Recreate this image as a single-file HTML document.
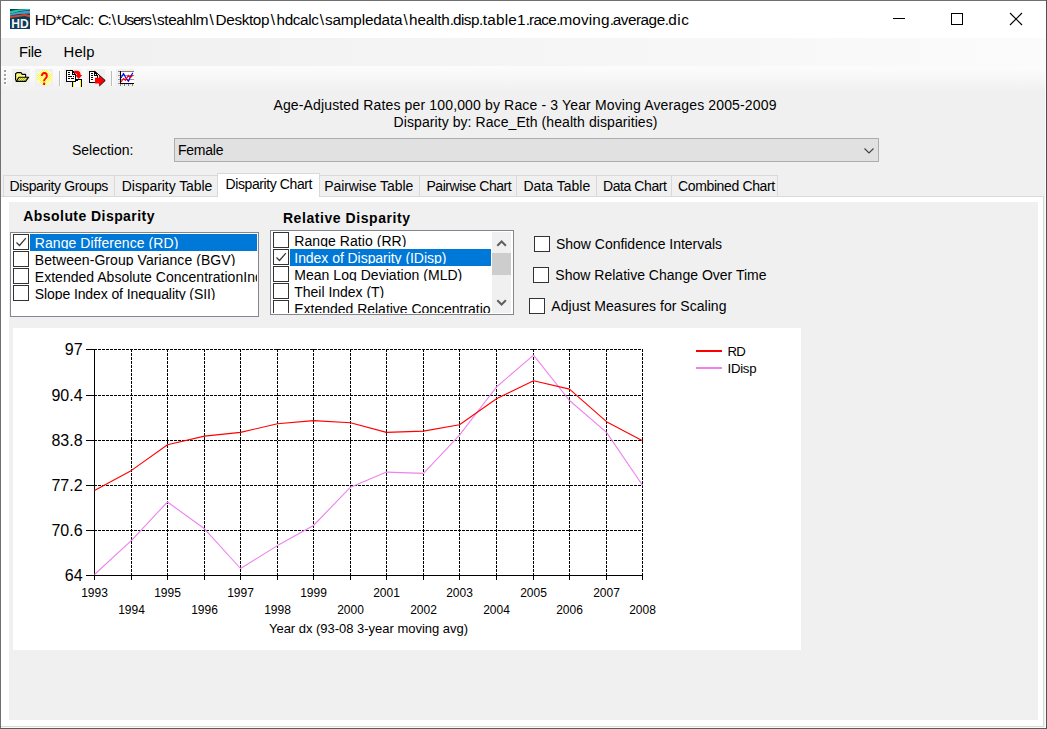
<!DOCTYPE html>
<html lang="en">
<head>
<meta charset="utf-8">
<title>HD*Calc</title>
<style>
html,body{margin:0;padding:0;}
body{width:1047px;height:729px;overflow:hidden;background:#f0f0f0;font-family:"Liberation Sans",sans-serif;color:#000;}
#win{position:relative;width:1047px;height:729px;overflow:hidden;background:#f0f0f0;}
.abs{position:absolute;}
.t{position:absolute;white-space:nowrap;line-height:1;}
#b-top{left:0;top:0;width:1047px;height:1px;background:#707070;}
#b-left{left:0;top:0;width:1px;height:729px;background:#707070;}
#b-right{left:1046px;top:0;width:1px;height:729px;background:#505050;}
#w-right{left:1045px;top:38px;width:1px;height:690px;background:#fbfbfb;}
#w-bottom{left:1px;top:727px;width:1045px;height:1px;background:#fbfbfb;}
#b-bottom{left:0;top:728px;width:1047px;height:1px;background:#5a5a5a;}
#titlebar{left:1px;top:1px;width:1045px;height:37px;background:#fff;}
#menubar{left:1px;top:38px;width:1045px;height:28px;background:linear-gradient(to right,#f0f0f0 0%,#f5f5f5 50%,#fbfbfb 100%);}
#toolbar{left:1px;top:66px;width:1045px;height:26px;background:linear-gradient(to bottom,#fcfcfc 0%,#f8f8f8 40%,#f0f0f0 100%);}
.tbtn{position:absolute;top:69px;width:18px;height:18px;background:#f0f0f0;}
.sep{position:absolute;top:71px;width:1px;height:15px;background:#bdbdbd;box-shadow:1px 0 0 #fdfdfd;}
.tab{position:absolute;top:175px;height:21px;box-sizing:border-box;border:1px solid #d9d9d9;border-bottom:none;background:#f0f0f0;}
.tab.sel{top:173px;height:24px;background:#fff;}
#tabpage{left:1px;top:196px;width:1043px;height:531px;background:#fff;box-sizing:border-box;border:1px solid #d9d9d9;border-left:none;}
#panel{left:9px;top:202px;width:1029px;height:518px;background:#f0f0f0;}
.listbox{position:absolute;box-sizing:border-box;border:1px solid #828790;background:#fff;overflow:hidden;}
.row{position:absolute;height:17px;overflow:hidden;white-space:nowrap;font-size:14px;}
.row .clip{position:absolute;left:0;top:0;width:100%;height:15px;overflow:hidden;}
.row span{position:absolute;top:2px;line-height:1;}
.row.sel{background:#0078d7;color:#fff;}
.cb{position:absolute;width:16px;height:16px;box-sizing:border-box;border:1px solid #333;background:#fff;}
#combo{left:174px;top:138px;width:705px;height:24px;box-sizing:border-box;border:1px solid #adadad;background:#e1e1e1;}
</style>
</head>
<body>
<div id="win">
  <div id="titlebar" class="abs"></div>
  <svg class="abs" style="left:10px;top:9px" width="20" height="20" viewBox="0 0 20 20" font-family="Liberation Sans, sans-serif">
    <rect width="20" height="20" fill="#0f3b58"/>
    <path d="M0,2.2 C6,0.6 11,0.2 17.5,0 L20,0 L20,0.8 C12,1.6 6,2.8 0,4.8 Z" fill="#19cf9d"/>
    <path d="M0,4.9 C6,3 13,2.2 20,1.6 L20,4.6 C13,4.6 6,5.4 0,6.8 Z" fill="#4f96cc"/>
    <path d="M0,7 L8,6 L14.8,4.9 L20,6 L20,8.6 L14.8,7 L8,8 L0,8.9 Z" fill="#cc4a2d"/>
    <text x="10" y="18.7" font-size="13.4" font-weight="bold" fill="#f4f6f8" text-anchor="middle" textLength="17.4" lengthAdjust="spacingAndGlyphs">HD</text>
  </svg>
  <svg class="abs" style="left:880px;top:6px" width="160" height="26" viewBox="880 6 160 26" fill="none" stroke="#000" stroke-width="1" shape-rendering="crispEdges">
    <line x1="893" y1="18.5" x2="905" y2="18.5"/>
    <rect x="951.5" y="13.5" width="11" height="11"/>
    <g shape-rendering="auto" stroke-width="1.1"><line x1="1010" y1="13" x2="1022" y2="25"/><line x1="1022" y1="13" x2="1010" y2="25"/></g>
  </svg>
  <div id="menubar" class="abs"></div>
  <div id="toolbar" class="abs"></div>
  <!-- toolbar -->
  <div class="tbtn" style="left:12px"></div><div class="tbtn" style="left:35px"></div>
  <div class="tbtn" style="left:64px"></div><div class="tbtn" style="left:87px"></div><div class="tbtn" style="left:116px"></div>
  <div class="sep" style="left:59px"></div><div class="sep" style="left:111px"></div>
  <svg class="abs" style="left:0;top:66px" width="140" height="24" viewBox="0 66 140 24" font-family="Liberation Sans, sans-serif">
    <g shape-rendering="crispEdges">
      <g fill="#fff"><rect x="5" y="71" width="2" height="2"/><rect x="5" y="75" width="2" height="2"/><rect x="5" y="79" width="2" height="2"/><rect x="5" y="83" width="2" height="2"/></g>
      <g fill="#a0a0a0"><rect x="4" y="70" width="2" height="2"/><rect x="4" y="74" width="2" height="2"/><rect x="4" y="78" width="2" height="2"/><rect x="4" y="82" width="2" height="2"/></g>
    </g>
    <defs>
      <pattern id="dyw" width="2" height="2" patternUnits="userSpaceOnUse"><rect width="2" height="2" fill="#ffffff"/><rect x="0" y="0" width="1" height="1" fill="#ffff00"/><rect x="1" y="1" width="1" height="1" fill="#ffff00"/></pattern>
      <pattern id="dyg" width="2" height="2" patternUnits="userSpaceOnUse"><rect width="2" height="2" fill="#ffff00"/><rect x="0" y="0" width="1" height="1" fill="#a8a890"/><rect x="1" y="1" width="1" height="1" fill="#a8a890"/></pattern>
    </defs>
    <!-- open folder -->
    <g stroke="#000" stroke-width="1.15" stroke-linejoin="round">
      <path d="M15.6,80.6 L15.6,73.8 L17,72.6 L21,72.6 L22.2,74.4 L25.6,74.4 L25.6,77" fill="url(#dyw)"/>
      <path d="M16.2,81.4 L19,77.2 L28.6,77.2 L25.6,81.4 Z" fill="url(#dyg)"/>
    </g>
    <!-- help -->
    <circle cx="44.4" cy="77.5" r="7.7" fill="url(#dyw)" shape-rendering="crispEdges"/>
    <text transform="translate(44.5,84.7) scale(0.78,1)" x="0" y="0" font-size="17.5" font-weight="bold" fill="#ff0000" text-anchor="middle">?</text>
    <!-- import -->
    <g shape-rendering="crispEdges">
      <rect x="74" y="80" width="7" height="7" fill="#fff"/>
      <rect x="73" y="81" width="1" height="6" fill="#ffff00"/><rect x="80" y="80" width="1" height="7" fill="#ffff00"/>
      <rect x="72" y="81" width="1" height="6" fill="#000"/><rect x="81" y="79" width="1" height="8" fill="#000"/><rect x="78" y="79" width="3" height="1" fill="#000"/>
      <path d="M66.5,70.5 L72.5,70.5 L75.5,74.5 L75.5,81.5 L66.5,81.5 Z" fill="#fff" stroke="#000"/>
      <path d="M72.5,70.5 L72.5,74.5 L75.5,74.5" fill="none" stroke="#000"/>
      <g fill="#000"><rect x="68" y="72" width="2" height="1"/><rect x="68" y="74" width="2" height="1"/><rect x="68" y="76" width="4" height="1"/><rect x="73" y="76" width="1" height="1"/><rect x="68" y="78" width="2" height="1"/><rect x="71" y="78" width="3" height="1"/><rect x="76" y="79" width="2" height="2"/></g>
    </g>
    <path d="M74.2,70.8 L77.5,70.8 C79.6,71 80.6,72.4 80.6,75 L82.3,75 L78.7,79 L75.2,75 L77,75 C77,73.8 76.4,73.4 74.2,73.4 Z" fill="#ff0000"/>
    <!-- export -->
    <g shape-rendering="crispEdges">
      <path d="M89.5,71.5 L94.5,71.5 L97.5,75.5 L97.5,82.5 L89.5,82.5 Z" fill="#fff" stroke="#000"/>
      <path d="M94.5,71.5 L94.5,75.5 L97.5,75.5" fill="none" stroke="#000"/>
      <g fill="#000"><rect x="91" y="73" width="2" height="1"/><rect x="91" y="75" width="2" height="1"/><rect x="91" y="77" width="2" height="1"/><rect x="91" y="79" width="2" height="1"/></g>
    </g>
    <path d="M95,77.8 L99,77.8 L99,75.6 L105.2,80.5 L99,86 L99,83.6 L95,83.6 Z" fill="#ff0000"/>
    <path d="M94.8,71.2 L105.2,80.5 L99.4,86" fill="none" stroke="#000" stroke-width="1"/>
    <!-- chart -->
    <g shape-rendering="crispEdges">
      <rect x="121" y="72" width="13" height="11" fill="#fff"/>
      <g stroke="#808080"><line x1="118" y1="71.5" x2="134" y2="71.5"/></g>
      <g stroke="#9a9a9a"><line x1="118" y1="75.5" x2="134" y2="75.5"/><line x1="118" y1="79.5" x2="134" y2="79.5"/></g>
      <g stroke="#c8c8c8"><line x1="119" y1="73.5" x2="120" y2="73.5"/><line x1="119" y1="77.5" x2="120" y2="77.5"/><line x1="119" y1="81.5" x2="120" y2="81.5"/></g>
      <g stroke="#000"><line x1="120.5" y1="71" x2="120.5" y2="84"/><line x1="120" y1="83.5" x2="134" y2="83.5"/></g>
      <g stroke="#909090"><line x1="118" y1="83.5" x2="120" y2="83.5"/></g>
      <g stroke="#808080"><line x1="120.5" y1="84" x2="120.5" y2="86"/><line x1="124.5" y1="84" x2="124.5" y2="86"/><line x1="128.5" y1="84" x2="128.5" y2="86"/><line x1="132.5" y1="84" x2="132.5" y2="86"/></g>
      <g stroke="#c0c0c0"><line x1="122.5" y1="84" x2="122.5" y2="85"/><line x1="126.5" y1="84" x2="126.5" y2="85"/><line x1="130.5" y1="84" x2="130.5" y2="85"/></g>
    </g>
    <polyline points="121.3,77.6 123.5,73.4 125.6,77.6 128.5,81.4 130.5,76.5 132.6,73.2" fill="none" stroke="#0000ff" stroke-width="1.15" stroke-linejoin="round" stroke-linecap="round"/>
    <polyline points="121.3,81.6 123.5,78.5 125.4,80.4 128.4,75.3 130.4,77.6 132.8,75.4" fill="none" stroke="#ff0000" stroke-width="1.15" stroke-linejoin="round" stroke-linecap="round"/>
  </svg>

  <div id="combo" class="abs"></div>
  <svg class="abs" style="left:860px;top:144px" width="16" height="12" viewBox="860 144 16 12"><polyline points="864.5,148.5 869,153 873.5,148.5" fill="none" stroke="#404040" stroke-width="1.1"/></svg>

  <div class="tab" style="left:3px;width:112px"></div>
  <div class="tab" style="left:114px;width:104px"></div>
  <div class="tab sel" style="left:217px;width:103px"></div>
  <div class="tab" style="left:319px;width:101px"></div>
  <div class="tab" style="left:419px;width:98px"></div>
  <div class="tab" style="left:516px;width:81px"></div>
  <div class="tab" style="left:596px;width:76px"></div>
  <div class="tab" style="left:671px;width:107px"></div>
  <div id="tabpage" class="abs"></div>
  <div class="abs" style="left:218px;top:195px;width:101px;height:3px;background:#fff"></div>
  <div id="panel" class="abs"></div>

  <div class="listbox" style="left:10px;top:232px;width:249px;height:85px">
  <div class="row sel" style="left:19px;top:1px;width:227px"><div class="clip"><span style="left:4.8px;letter-spacing:0.069px">Range Difference (RD)</span></div></div>
  <div class="cb" style="left:2px;top:1px;"><svg width="14" height="14" viewBox="0 0 14 14" style="position:absolute;left:0;top:0"><polyline points="2.5,7.5 5.5,10.5 11.8,3.2" fill="none" stroke="#333" stroke-width="1.2"/></svg></div>
  <div class="row" style="left:19px;top:18px;width:227px"><div class="clip"><span style="left:4.8px;letter-spacing:0.059px">Between-Group Variance (BGV)</span></div></div>
  <div class="cb" style="left:2px;top:18px;"></div>
  <div class="row" style="left:19px;top:35px;width:227px"><div class="clip"><span style="left:4.8px;letter-spacing:0.020px">Extended Absolute ConcentrationIndex (ACI)</span></div></div>
  <div class="cb" style="left:2px;top:35px;"></div>
  <div class="row" style="left:19px;top:52px;width:227px"><div class="clip"><span style="left:4.8px;letter-spacing:-0.102px">Slope Index of Inequality (SII)</span></div></div>
  <div class="cb" style="left:2px;top:52px;"></div>
  <div class="abs" style="left:0;bottom:0;width:100%;height:1px;background:#fff"></div></div>
  <div class="listbox" style="left:270px;top:230px;width:244px;height:85px">
  <div class="row" style="left:19px;top:1px;width:201px"><div class="clip"><span style="left:4.3px;letter-spacing:0.058px">Range Ratio (RR)</span></div></div>
  <div class="cb" style="left:2px;top:1px;"></div>
  <div class="row sel" style="left:19px;top:18px;width:201px"><div class="clip"><span style="left:4.3px;letter-spacing:-0.049px">Index of Disparity (IDisp)</span></div></div>
  <div class="cb" style="left:2px;top:18px;"><svg width="14" height="14" viewBox="0 0 14 14" style="position:absolute;left:0;top:0"><polyline points="2.5,7.5 5.5,10.5 11.8,3.2" fill="none" stroke="#333" stroke-width="1.2"/></svg></div>
  <div class="row" style="left:19px;top:35px;width:201px"><div class="clip"><span style="left:4.3px;letter-spacing:0.029px">Mean Log Deviation (MLD)</span></div></div>
  <div class="cb" style="left:2px;top:35px;"></div>
  <div class="row" style="left:19px;top:52px;width:201px"><div class="clip"><span style="left:4.3px;letter-spacing:-0.020px">Theil Index (T)</span></div></div>
  <div class="cb" style="left:2px;top:52px;"></div>
  <div class="row" style="left:19px;top:69px;width:201px"><div class="clip"><span style="left:4.3px;letter-spacing:-0.020px">Extended Relative Concentration Index (RCI)</span></div></div>
  <div class="cb" style="left:2px;top:69px;"></div>
  <div class="abs" style="left:221px;top:1px;width:19px;height:81px;background:#f0f0f0"></div>
  <div class="abs" style="left:221px;top:22px;width:19px;height:22px;background:#cdcdcd"></div>
  <svg class="abs" style="left:221px;top:1px" width="19" height="81" viewBox="0 0 19 81"><polyline points="5.3,13.8 9.6,9.5 13.9,13.8" fill="none" stroke="#606060" stroke-width="2"/><polyline points="5.3,68.2 9.6,72.5 13.9,68.2" fill="none" stroke="#606060" stroke-width="2"/></svg>
  <div class="abs" style="left:0;bottom:0;width:100%;height:1px;background:#fff"></div></div>
  <div class="cb" style="left:534px;top:236px;"></div>
  <div class="cb" style="left:533px;top:267px;"></div>
  <div class="cb" style="left:529px;top:298px;"></div>
<svg class="abs" style="left:13px;top:328px" width="788" height="322" viewBox="13 328 788 322" font-family="Liberation Sans, sans-serif">
<rect x="13" y="328" width="788" height="322" fill="#fff"/>
<g shape-rendering="crispEdges" stroke="#000" stroke-width="1" fill="none">
<line x1="94" y1="349.5" x2="643" y2="349.5" stroke-dasharray="3 1"/>
<line x1="94" y1="395.5" x2="643" y2="395.5" stroke-dasharray="3 1"/>
<line x1="94" y1="440.5" x2="643" y2="440.5" stroke-dasharray="3 1"/>
<line x1="94" y1="485.5" x2="643" y2="485.5" stroke-dasharray="3 1"/>
<line x1="94" y1="530.5" x2="643" y2="530.5" stroke-dasharray="3 1"/>
<line x1="131.5" y1="349" x2="131.5" y2="575" stroke-dasharray="3 1"/>
<line x1="167.5" y1="349" x2="167.5" y2="575" stroke-dasharray="3 1"/>
<line x1="204.5" y1="349" x2="204.5" y2="575" stroke-dasharray="3 1"/>
<line x1="240.5" y1="349" x2="240.5" y2="575" stroke-dasharray="3 1"/>
<line x1="277.5" y1="349" x2="277.5" y2="575" stroke-dasharray="3 1"/>
<line x1="313.5" y1="349" x2="313.5" y2="575" stroke-dasharray="3 1"/>
<line x1="350.5" y1="349" x2="350.5" y2="575" stroke-dasharray="3 1"/>
<line x1="386.5" y1="349" x2="386.5" y2="575" stroke-dasharray="3 1"/>
<line x1="423.5" y1="349" x2="423.5" y2="575" stroke-dasharray="3 1"/>
<line x1="459.5" y1="349" x2="459.5" y2="575" stroke-dasharray="3 1"/>
<line x1="496.5" y1="349" x2="496.5" y2="575" stroke-dasharray="3 1"/>
<line x1="533.5" y1="349" x2="533.5" y2="575" stroke-dasharray="3 1"/>
<line x1="569.5" y1="349" x2="569.5" y2="575" stroke-dasharray="3 1"/>
<line x1="606.5" y1="349" x2="606.5" y2="575" stroke-dasharray="3 1"/>
<line x1="642.5" y1="349" x2="642.5" y2="575" stroke-dasharray="3 1"/>
<line x1="94.5" y1="349" x2="94.5" y2="580"/>
<line x1="86" y1="575.5" x2="643" y2="575.5"/>
<line x1="86" y1="349.5" x2="94" y2="349.5"/>
<line x1="86" y1="395.5" x2="94" y2="395.5"/>
<line x1="86" y1="440.5" x2="94" y2="440.5"/>
<line x1="86" y1="485.5" x2="94" y2="485.5"/>
<line x1="86" y1="530.5" x2="94" y2="530.5"/>
<line x1="131.5" y1="576" x2="131.5" y2="580"/>
<line x1="167.5" y1="576" x2="167.5" y2="580"/>
<line x1="204.5" y1="576" x2="204.5" y2="580"/>
<line x1="240.5" y1="576" x2="240.5" y2="580"/>
<line x1="277.5" y1="576" x2="277.5" y2="580"/>
<line x1="313.5" y1="576" x2="313.5" y2="580"/>
<line x1="350.5" y1="576" x2="350.5" y2="580"/>
<line x1="386.5" y1="576" x2="386.5" y2="580"/>
<line x1="423.5" y1="576" x2="423.5" y2="580"/>
<line x1="459.5" y1="576" x2="459.5" y2="580"/>
<line x1="496.5" y1="576" x2="496.5" y2="580"/>
<line x1="533.5" y1="576" x2="533.5" y2="580"/>
<line x1="569.5" y1="576" x2="569.5" y2="580"/>
<line x1="606.5" y1="576" x2="606.5" y2="580"/>
<line x1="642.5" y1="576" x2="642.5" y2="580"/>
</g>
<polyline points="94.5,574.5 131.5,540.3 167.5,502.0 204.5,528.8 240.5,568.5 277.5,545.6 313.5,525.5 350.5,487.2 386.5,472.1 423.5,473.4 459.5,435.1 496.5,387.0 533.5,355.1 569.5,400.5 606.5,432.4 642.5,485.2" fill="none" stroke="#ee82ee" stroke-width="1.1" stroke-linejoin="round"/>
<polyline points="94.5,490.5 131.5,470.4 167.5,444.8 204.5,436.1 240.5,432.4 277.5,423.7 313.5,420.6 350.5,422.7 386.5,432.4 423.5,431.1 459.5,424.7 496.5,398.8 533.5,380.7 569.5,389.1 606.5,421.7 642.5,440.8" fill="none" stroke="#ff0000" stroke-width="1.1" stroke-linejoin="round"/>
<text x="82.6" y="355.2" font-size="16" text-anchor="end">97</text>
<text x="82.6" y="401.2" font-size="16" text-anchor="end">90.4</text>
<text x="82.6" y="446.2" font-size="16" text-anchor="end">83.8</text>
<text x="82.6" y="491.2" font-size="16" text-anchor="end">77.2</text>
<text x="82.6" y="536.2" font-size="16" text-anchor="end">70.6</text>
<text x="82.6" y="581.2" font-size="16" text-anchor="end">64</text>
<text x="94.5" y="596.6" font-size="12" text-anchor="middle">1993</text>
<text x="131.5" y="613.8" font-size="12" text-anchor="middle">1994</text>
<text x="167.5" y="596.6" font-size="12" text-anchor="middle">1995</text>
<text x="204.5" y="613.8" font-size="12" text-anchor="middle">1996</text>
<text x="240.5" y="596.6" font-size="12" text-anchor="middle">1997</text>
<text x="277.5" y="613.8" font-size="12" text-anchor="middle">1998</text>
<text x="313.5" y="596.6" font-size="12" text-anchor="middle">1999</text>
<text x="350.5" y="613.8" font-size="12" text-anchor="middle">2000</text>
<text x="386.5" y="596.6" font-size="12" text-anchor="middle">2001</text>
<text x="423.5" y="613.8" font-size="12" text-anchor="middle">2002</text>
<text x="459.5" y="596.6" font-size="12" text-anchor="middle">2003</text>
<text x="496.5" y="613.8" font-size="12" text-anchor="middle">2004</text>
<text x="533.5" y="596.6" font-size="12" text-anchor="middle">2005</text>
<text x="569.5" y="613.8" font-size="12" text-anchor="middle">2006</text>
<text x="606.5" y="596.6" font-size="12" text-anchor="middle">2007</text>
<text x="642.5" y="613.8" font-size="12" text-anchor="middle">2008</text>
<line x1="696" y1="351" x2="722" y2="351" stroke="#ff0000" stroke-width="2" shape-rendering="crispEdges"/>
<line x1="696" y1="368" x2="722" y2="368" stroke="#ee82ee" stroke-width="2" shape-rendering="crispEdges"/>
</svg>
  <div class="t" id="m1" style="left:19.1px;top:44.77px;font-size:14.8px;letter-spacing:-0.336px;">File</div>
  <div class="t" id="m2" style="left:63.6px;top:44.77px;font-size:14.8px;letter-spacing:0.141px;">Help</div>
  <div class="t" id="h1" style="left:273.4px;top:97.85px;font-size:14px;letter-spacing:0.148px;">Age-Adjusted Rates per 100,000 by Race - 3 Year Moving Averages 2005-2009</div>
  <div class="t" id="h2" style="left:393.6px;top:114.85px;font-size:14px;letter-spacing:0.075px;">Disparity by: Race_Eth (health disparities)</div>
  <div class="t" id="sel" style="left:71.9px;top:143.05px;font-size:14px;letter-spacing:0.002px;">Selection:</div>
  <div class="t" id="fem" style="left:178.0px;top:143.05px;font-size:14px;letter-spacing:-0.248px;">Female</div>
  <div class="t" id="tb1" style="left:9.5px;top:179.15px;font-size:14px;letter-spacing:-0.360px;">Disparity Groups</div>
  <div class="t" id="tb2" style="left:121.8px;top:179.15px;font-size:14px;letter-spacing:-0.071px;">Disparity Table</div>
  <div class="t" id="tb3" style="left:225.6px;top:177.45px;font-size:14px;letter-spacing:-0.413px;">Disparity Chart</div>
  <div class="t" id="tb4" style="left:324.2px;top:179.15px;font-size:14px;letter-spacing:-0.073px;">Pairwise Table</div>
  <div class="t" id="tb5" style="left:426.4px;top:179.15px;font-size:14px;letter-spacing:-0.438px;">Pairwise Chart</div>
  <div class="t" id="tb6" style="left:523.4px;top:179.15px;font-size:14px;letter-spacing:0.011px;">Data Table</div>
  <div class="t" id="tb7" style="left:603.0px;top:179.15px;font-size:14px;letter-spacing:-0.420px;">Data Chart</div>
  <div class="t" id="tb8" style="left:678.0px;top:179.15px;font-size:14px;letter-spacing:-0.367px;">Combined Chart</div>
  <div class="t" id="abs" style="left:23.3px;top:209.05px;font-size:14px;letter-spacing:0.439px;font-weight:bold;">Absolute Disparity</div>
  <div class="t" id="rel" style="left:282.9px;top:210.95px;font-size:14px;letter-spacing:0.567px;font-weight:bold;">Relative Disparity</div>
  <div class="t" id="c1" style="left:556.0px;top:237.15px;font-size:14px;letter-spacing:-0.022px;">Show Confidence Intervals</div>
  <div class="t" id="c2" style="left:555.3px;top:267.95px;font-size:14px;letter-spacing:0.014px;">Show Relative Change Over Time</div>
  <div class="t" id="c3" style="left:551.3px;top:298.75px;font-size:14px;letter-spacing:0.033px;">Adjust Measures for Scaling</div>
  <div class="t" id="lg1" style="left:727.6px;top:344.73px;font-size:13.2px;letter-spacing:-0.781px;">RD</div>
  <div class="t" id="lg2" style="left:727.6px;top:361.83px;font-size:13.2px;letter-spacing:-0.289px;">IDisp</div>
  <div class="t" id="xt" style="left:269.0px;top:621.50px;font-size:13px;letter-spacing:-0.021px;">Year dx (93-08 3-year moving avg)</div>
  <div class="t" id="title" style="left:36.3px;top:12.15px;font-size:15.3px;white-space:pre;width:655px;height:16px"><span style="position:absolute;left:-1.60px;top:0;letter-spacing:-0.487px">HD*Calc:</span><span style="position:absolute;left:58.7px;top:0"> </span><span style="position:absolute;left:61.70px;top:0;letter-spacing:-1.413px">C:</span><span style="position:absolute;left:75.48px;top:0;letter-spacing:0.000px">\</span><span style="position:absolute;left:80.40px;top:0;letter-spacing:-1.213px">Users</span><span style="position:absolute;left:115.88px;top:0;letter-spacing:0.000px">\</span><span style="position:absolute;left:120.60px;top:0;letter-spacing:-0.310px">steahlm</span><span style="position:absolute;left:173.27px;top:0;letter-spacing:0.000px">\</span><span style="position:absolute;left:179.30px;top:0;letter-spacing:-0.371px">Desktop</span><span style="position:absolute;left:234.57px;top:0;letter-spacing:0.000px">\</span><span style="position:absolute;left:240.20px;top:0;letter-spacing:-0.364px">hdcalc</span><span style="position:absolute;left:283.53px;top:0;letter-spacing:0.000px">\</span><span style="position:absolute;left:288.70px;top:0;letter-spacing:-0.177px">sampledata</span><span style="position:absolute;left:367.28px;top:0;letter-spacing:0.000px">\</span><span style="position:absolute;left:372.80px;top:0;letter-spacing:-0.190px">health.</span><span style="position:absolute;left:416.60px;top:0;letter-spacing:-0.478px">disp.</span><span style="position:absolute;left:446.50px;top:0;letter-spacing:0.194px">table1.</span><span style="position:absolute;left:492.80px;top:0;letter-spacing:-0.679px">race.</span><span style="position:absolute;left:523.20px;top:0;letter-spacing:0.140px">moving.</span><span style="position:absolute;left:576.50px;top:0;letter-spacing:-0.490px">average.</span><span style="position:absolute;left:632.00px;top:0;letter-spacing:0.569px">dic</span></div>

  <div id="w-right" class="abs"></div><div id="w-bottom" class="abs"></div><div id="b-top" class="abs"></div><div id="b-left" class="abs"></div><div id="b-right" class="abs"></div><div id="b-bottom" class="abs"></div>
</div>
</body>
</html>
